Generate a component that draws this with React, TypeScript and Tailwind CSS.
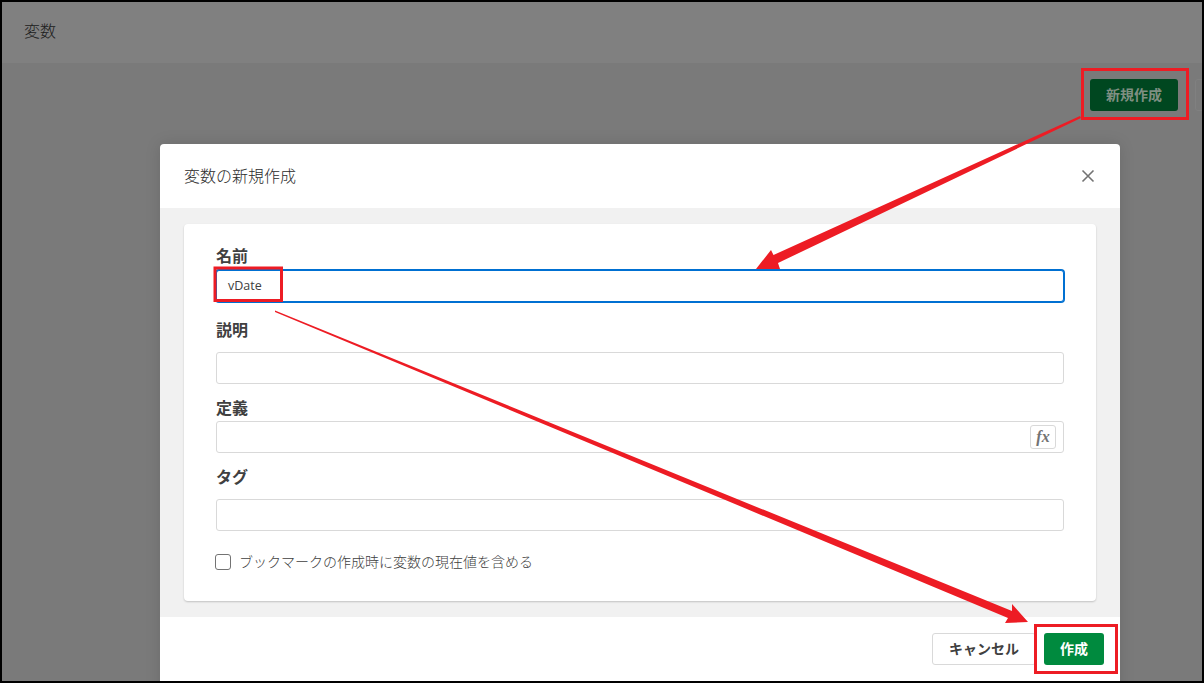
const jp = "font-['Noto_Sans_CJK_JP','Noto_Sans',sans-serif]";

function Field({ label, children, labelClass }: { label: string; children?: React.ReactNode; labelClass: string }) {
  return (
    <div>
      <div className={`${labelClass} text-base leading-6 font-bold text-[#404040]`}>{label}</div>
      {children}
    </div>
  );
}

function Box({ children }: { children?: React.ReactNode }) {
  return (
    <div className="h-8 w-full rounded-[3px] border border-[#d9d9d9] bg-white flex items-center justify-end pr-[8px]">{children}</div>
  );
}

export default function App() {
  return (
    <div className={`relative w-[1204px] h-[683px] overflow-hidden border-2 border-black bg-[#7a7a7a] ${jp}`}>
      <header className="h-[61px] bg-[#808080] flex items-center pl-[22px] pb-[6px] text-base font-light text-[#1c1c1c]">変数</header>
      <div className="flex justify-end pt-[16px] gap-[17px]">
        <button className="h-8 w-[88px] rounded-[3px] bg-[#004720] pb-[2px] text-[14px] font-bold text-[#7f8f82]">新規作成</button>
        <div className="h-8 w-[24px] -mr-[17px] shrink-0 rounded-[3px] border border-[#808080]" />
      </div>

      <div className="absolute left-[158px] top-[142px] w-[960px] h-[560px] rounded-[4px] bg-white shadow-[0_0_16px_rgba(0,0,0,0.12)] flex flex-col">
        <div className="h-16 shrink-0 flex items-center justify-between pl-6 pr-[24px] text-base font-light text-[#2b2b2b]">
          <span className="pb-[2px]">変数の新規作成</span>
          <svg width="16" height="16" viewBox="0 0 16 16" fill="none" stroke="#737373" strokeWidth="1.6"><path d="M2.5 2.5l11 11M13.5 2.5l-11 11" /></svg>
        </div>
        <div className="h-[409px] shrink-0 bg-[#f1f1f1] px-6 pt-4">
          <div className="h-[377px] rounded-[4px] bg-white shadow-[0_1px_2px_rgba(0,0,0,0.2)] px-8 pt-[19px]">
            <Field label="名前" labelClass="h-[27px]">
              <div className="h-8 w-full rounded-[3px] border border-[#0070d2] ring-1 ring-[#0070d2] bg-white flex items-center pl-[11px] pt-[1px] font-['Open_Sans',sans-serif] text-[12.5px] text-[#404040]">vDate</div>
            </Field>
            <Field label="説明" labelClass="mt-[15px] h-[35px]"><Box /></Field>
            <Field label="定義" labelClass="mt-[11px] h-[26px]">
              <Box>
                <span className="w-[26px] h-[24px] -mr-[1px] rounded-[3px] border border-[#d9d9d9] flex items-center justify-center font-['Liberation_Serif',serif] italic font-bold text-[16px] text-[#737373]">fx</span>
              </Box>
            </Field>
            <Field label="タグ" labelClass="mt-[11px] h-[35px]"><Box /></Field>
            <div className="mt-[22px] flex items-center h-[18px] -ml-[1px] gap-2 text-[14px] text-[#404040]">
              <span className="w-4 h-4 rounded-[3px] border border-[#737373] bg-white" />
              <span className="pb-[2px] font-light">ブックマークの作成時に変数の現在値を含める</span>
            </div>
          </div>
        </div>
        <div className="flex justify-end gap-2 pt-4 pr-4">
          <button className="h-8 w-[104px] rounded-[3px] border border-[#d9d9d9] bg-white pb-[1px] text-[14px] font-bold text-[#404040]">キャンセル</button>
          <button className="h-8 w-[60px] rounded-[3px] bg-[#008a3e] pb-[1px] text-[14px] font-bold text-white">作成</button>
        </div>
      </div>

      <svg className="absolute -left-[2px] -top-[2px]" width="1204" height="683" fill="none">
        <rect x="1082.5" y="69.5" width="105" height="49" stroke="#ed1c24" strokeWidth="3" />
        <rect x="215" y="268" width="66.5" height="32.5" stroke="#ed1c24" strokeWidth="3" />
        <rect x="1035.5" y="625.5" width="81" height="47" stroke="#ed1c24" strokeWidth="3" />
        <path d="M756 269 L771 250 L773.5 255 L1080 116 L1081 118 L778 263 L780 269 Z" fill="#ed1c24" />
        <path d="M275 310.5 L1012 611 L1012 604 L1028 622 L1005 623 L1008 618 L275 312 Z" fill="#ed1c24" />
      </svg>
    </div>
  );
}
